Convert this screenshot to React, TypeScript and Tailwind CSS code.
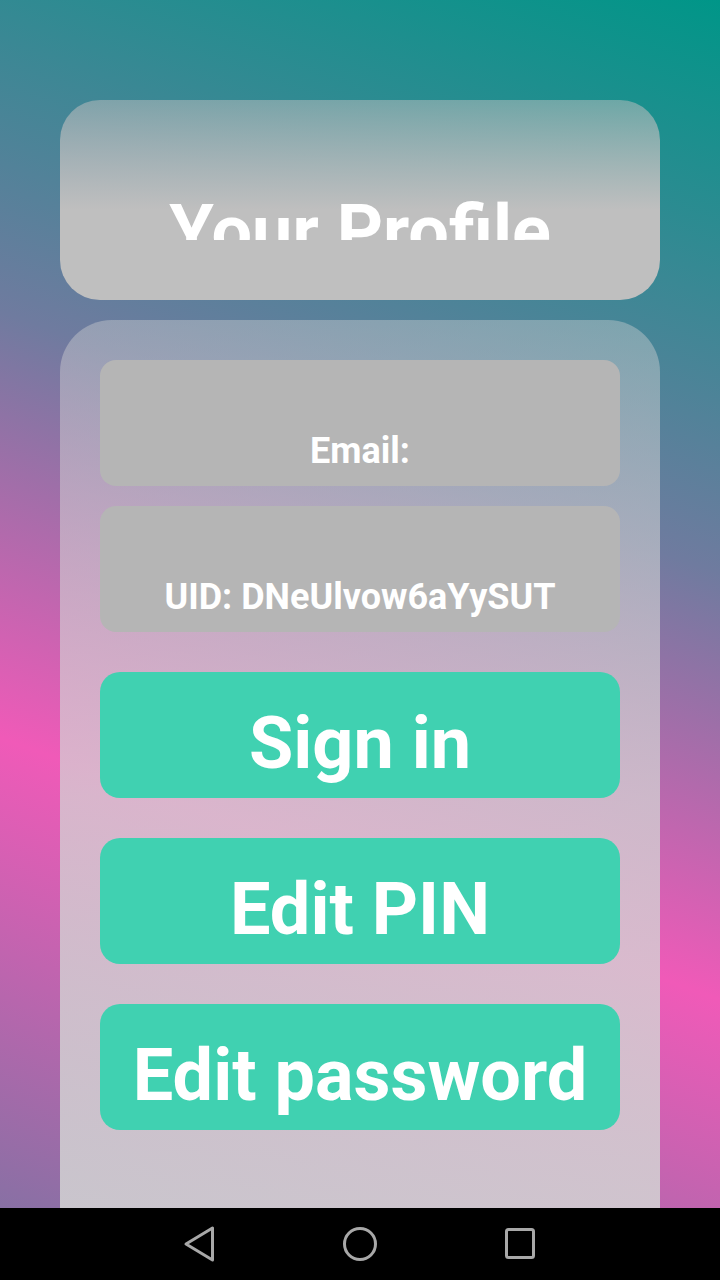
import React from "react";

const InfoBox = ({ text }: { text: string }) => (
  <div className="h-[126px] rounded-[16px] bg-[#b5b5b5] flex items-end justify-center pb-[17px]">
    <span className="text-white font-bold text-[36px] leading-none">{text}</span>
  </div>
);

const ActionButton = ({ label }: { label: string }) => (
  <button className="h-[126px] w-full rounded-[20px] bg-[#40d1b1] flex items-center justify-center pt-[18px]">
    <span className="text-white font-bold text-[72px] leading-none">{label}</span>
  </button>
);

export default function App() {
  return (
    <div className="w-[720px] h-[1280px] flex flex-col font-['Roboto',sans-serif]">
      <main className="h-[1208px] overflow-hidden px-[60px] pt-[100px] bg-[linear-gradient(200deg,#009688_0%,#6f7b9f_39%,#f05ab8_68%,#8870a4_100%)]">
        {/* Header card */}
        <div className="h-[200px] rounded-[40px] pt-[96px] bg-[linear-gradient(to_bottom,rgba(191,191,191,0.5)_0%,#bfbfbf_55%)]">
          <div className="h-[44px] overflow-hidden flex justify-center">
            <h1 className="text-white font-bold text-[72px] leading-none whitespace-nowrap">Your Profile</h1>
          </div>
        </div>

        {/* Profile card */}
        <div className="mt-[20px] rounded-[52px] px-[40px] pt-[40px] pb-[140px] bg-[linear-gradient(to_bottom,rgba(211,211,211,0.4)_0%,rgba(211,211,211,0.75)_50%,rgba(211,211,211,0.88)_100%)]">
          <div className="flex flex-col gap-[20px]">
            <InfoBox text="Email:" />
            <InfoBox text="UID: DNeUlvow6aYySUT" />
          </div>
          <div className="flex flex-col gap-[40px] mt-[40px]">
            <ActionButton label="Sign in" />
            <ActionButton label="Edit PIN" />
            <ActionButton label="Edit password" />
          </div>
        </div>
      </main>

      {/* System navigation bar */}
      <nav className="h-[72px] bg-black flex items-center justify-center gap-[120px]">
        <svg width="40" height="40" viewBox="0 0 40 40" fill="none" stroke="#a8a8a8" strokeWidth="3" strokeLinejoin="round">
          <path d="M6 20 L32.5 4 L32.5 36 Z" />
        </svg>
        <svg width="40" height="40" viewBox="0 0 40 40" fill="none" stroke="#a8a8a8" strokeWidth="3">
          <circle cx="20" cy="20" r="15.5" />
        </svg>
        <svg width="40" height="40" viewBox="0 0 40 40" fill="none" stroke="#a8a8a8" strokeWidth="3">
          <rect x="6.5" y="5.5" width="27" height="28" rx="2" />
        </svg>
      </nav>
    </div>
  );
}
